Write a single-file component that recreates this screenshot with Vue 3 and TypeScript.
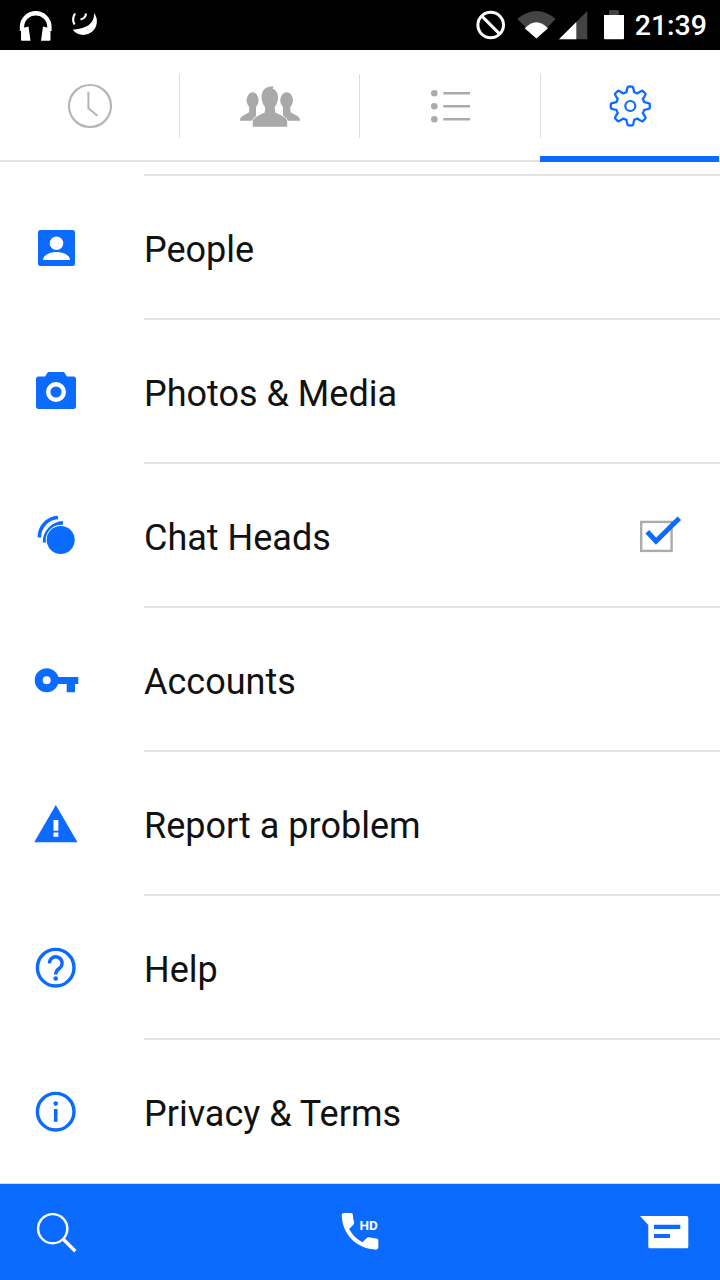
<script setup lang="ts">
const gearPath = (() => {
  const cx = 32.3, cy = 32, n = 8, pts: string[] = []
  for (let i = 0; i < 240; i++) {
    const t = (i / 240) * Math.PI * 2
    const c = Math.cos(n * t)
    const s = Math.max(-1, Math.min(1, c * 1.8))
    const r = 16.9 + 2.6 * s
    const x = cx + r * Math.sin(t)
    const y = cy - r * Math.cos(t)
    pts.push(`${x.toFixed(2)} ${y.toFixed(2)}`)
  }
  return 'M' + pts.join('L') + 'Z'
})()

const rows = [
  { key: 'people', label: 'People' },
  { key: 'camera', label: 'Photos & Media' },
  { key: 'chat', label: 'Chat Heads', check: true },
  { key: 'key', label: 'Accounts' },
  { key: 'warn', label: 'Report a problem' },
  { key: 'help', label: 'Help' },
  { key: 'info', label: 'Privacy & Terms' },
]
</script>

<template>
  <div class="page">
    <header class="status">
      <svg class="status-left" width="90" height="40" viewBox="0 0 90 40">
        <path d="M6 26V22a13.7 13.7 0 0 1 27.4 0v4" fill="none" stroke="#fff" stroke-width="4.4" />
        <path d="M5 23.5 12.5 21.5 14.5 35.8H6.5C5 35.8 5 35 5 33ZM34.5 23.5 27 21.5 25 35.8H33C34.5 35.8 34.5 35 34.5 33Z" fill="#fff" />
        <g transform="translate(52 4)">
          <path d="M26 4A13.5 13.5 0 0 1 4.7 20.7Q27 19 26 4Z" fill="#fff" />
          <path d="M7 4.5Q3.4 10.5 6.6 15.5M18 4.5Q17.5 9.5 12.5 10.5" fill="none" stroke="#fff" stroke-width="2.2" />
        </g>
      </svg>
      <div class="status-right">
        <svg width="156" height="50" viewBox="476 0 156 50">
          <circle cx="491.7" cy="25" r="12.8" fill="none" stroke="#fff" stroke-width="3" />
          <path d="M482.6 15.9 500.8 34.1" stroke="#fff" stroke-width="3" />
          <path d="M518.3 19Q537.5 3 556.7 19L537.4 38.5Z" fill="#444" />
          <path d="M525.7 28.3Q537.4 16 549 28.3L537.4 38.5Z" fill="#fff" />
          <path d="M560 39.3 588.3 11V39.3Z" fill="#444" />
          <path d="M560 39.3 577.3 22V39.3Z" fill="#fff" />
          <path d="M610 15V11.5C610 10.5 611 10 612 10H618C619 10 620 10.5 620 11.5V15Z" fill="#444" />
          <path d="M605 15H625V38C625 39 624.5 39.3 624 39.3H606C605.5 39.3 605 39 605 38Z" fill="#fff" />
        </svg>
        <span class="time">21:39</span>
      </div>
    </header>

    <nav class="tabs">
      <div class="tab sep">
        <svg width="64" height="64" viewBox="0 0 64 64">
          <circle cx="32" cy="32" r="21" fill="none" stroke="#b5b5b5" stroke-width="2.2" />
          <path d="M30.4 17.7V34.3L39.4 41.7" fill="none" stroke="#b5b5b5" stroke-width="2" />
        </svg>
      </div>
      <div class="tab sep">
        <svg width="64" height="64" viewBox="0 0 64 64">
          <g fill="#a9a9a9">
            <ellipse cx="14.6" cy="26.3" rx="6" ry="8" />
            <ellipse cx="48.6" cy="26.3" rx="6.4" ry="8" />
            <path d="M1.8 46.7C2 42 7 41 11 38.2L11.5 31H18V46.7Z" />
            <path d="M62.2 46.7C62 42 57 41 52.5 38.2L52 31H45V46.7Z" />
          </g>
          <g fill="#a9a9a9" stroke="#fff" stroke-width="1.6" paint-order="stroke">
            <path d="M14.8 52.7V47.5C15 43.5 21 41.5 26.8 38.6L27.5 30H36.5L37.2 38.6C43 41.5 49 43.5 49.2 47.5V52.7Z" />
            <path d="M23.6 23C23.6 16.5 27 12.4 35.5 12.2L34.6 14.4C38.4 16 40 19 40 23.5 40 30 36.5 35 31.8 35 27 35 23.6 29.5 23.6 23Z" />
          </g>
          <path d="M27.5 30H36.5L37.2 38.6 32 40 26.8 38.6Z" fill="#a9a9a9" />
        </svg>
      </div>
      <div class="tab">
        <svg width="64" height="64" viewBox="0 0 64 64">
          <g fill="#ababab">
            <circle cx="16.3" cy="19.3" r="3.3" />
            <circle cx="16.3" cy="32.3" r="3.3" />
            <circle cx="16.3" cy="45.3" r="3.3" />
          </g>
          <path d="M25.3 19.3H52M25.3 32.3H52M25.3 45.3H52" stroke="#ababab" stroke-width="2.6" />
        </svg>
      </div>
      <div class="tab active">
        <svg width="64" height="64" viewBox="0 0 64 64">
          <path :d="gearPath" fill="none" stroke="#0b6bff" stroke-width="2.3" stroke-linejoin="round" />
          <circle cx="32.3" cy="32" r="5" fill="none" stroke="#0b6bff" stroke-width="2.2" />
        </svg>
      </div>
    </nav>

    <main class="list">
      <div class="lead"></div>
      <div v-for="row in rows" :key="row.key" class="row">
        <span class="icon">
          <svg width="56" height="56" viewBox="0 0 56 56">
            <template v-if="row.key === 'people'">
              <rect x="10" y="10" width="37" height="36" rx="2.5" fill="#0b6bff" />
              <circle cx="28.5" cy="23.3" r="6.8" fill="#fff" />
              <path d="M15 40C15 35 22 32 28.5 32S42 35 42 40Z" fill="#fff" />
            </template>
            <template v-else-if="row.key === 'camera'">
              <path d="M10.5 12.5H17L20 8H36L39 12.5H45.5C47 12.5 48 13.5 48 15V42.5C48 44 47 45 45.5 45H10.5C9 45 8 44 8 42.5V15C8 13.5 9 12.5 10.5 12.5Z" fill="#0b6bff" />
              <circle cx="28" cy="28" r="7.8" fill="none" stroke="#fff" stroke-width="4.4" />
            </template>
            <template v-else-if="row.key === 'chat'">
              <path d="M11.4 29.5A19.5 19.5 0 0 1 30 9.5" fill="none" stroke="#0b6bff" stroke-width="3.6" />
              <path d="M16.5 34.5A19.5 19.5 0 0 1 35 14.8" fill="none" stroke="#0b6bff" stroke-width="3.6" />
              <circle cx="32.7" cy="32" r="14" fill="#0b6bff" stroke="#fff" stroke-width="2" paint-order="stroke" />
            </template>
            <template v-else-if="row.key === 'key'">
              <circle cx="18.7" cy="28.3" r="8" fill="none" stroke="#0b6bff" stroke-width="8" />
              <path d="M26 25H50.3V32H47V40.3H38.7V32H26Z" fill="#0b6bff" />
            </template>
            <template v-else-if="row.key === 'warn'">
              <path d="M27.8 9 49.5 46.3H6.2Z" fill="#0b6bff" />
              <path d="M25.5 24H30.3V34.7H25.5ZM25.5 36.4H30.3V40.8H25.5Z" fill="#fff" />
            </template>
            <template v-else-if="row.key === 'help'">
              <circle cx="27.7" cy="27.7" r="18.3" fill="none" stroke="#0b6bff" stroke-width="3.4" />
              <path d="M21.5 23.4A6.3 6.3 0 1 1 31.8 28C29 30 27.7 31 27.7 34.4" fill="none" stroke="#0b6bff" stroke-width="3.4" />
              <circle cx="27.7" cy="38.5" r="2.3" fill="#0b6bff" />
            </template>
            <template v-else>
              <circle cx="27.7" cy="27.7" r="18.3" fill="none" stroke="#0b6bff" stroke-width="3.4" />
              <circle cx="27.7" cy="19.5" r="2.3" fill="#0b6bff" />
              <path d="M27.7 25V37.8" stroke="#0b6bff" stroke-width="3.6" />
            </template>
          </svg>
        </span>
        <div class="label">
          <span class="label-text">{{ row.label }}</span>
          <svg v-if="row.check" class="check" width="56" height="56" viewBox="0 0 56 56">
            <rect x="9.2" y="13.9" width="30.4" height="29" fill="none" stroke="#ababab" stroke-width="2.4" />
            <path d="M15.3 23.7 24 33.2 47.3 10.3" fill="none" stroke="#0b6bff" stroke-width="5" />
          </svg>
        </div>
      </div>
    </main>

    <footer class="bottom">
      <span class="cell">
        <svg width="56" height="56" viewBox="0 0 56 56">
          <circle cx="24.7" cy="24.7" r="14.6" fill="none" stroke="#fff" stroke-width="2.4" />
          <path d="M35.3 35.3 47.3 47.3" stroke="#fff" stroke-width="3.4" />
        </svg>
      </span>
      <span class="cell">
        <svg width="56" height="56" viewBox="0 0 56 56">
          <path transform="translate(3.7 3) scale(2.03)" d="M6.62 10.79c1.44 2.83 3.76 5.14 6.59 6.59l2.2-2.2c.27-.27.67-.36 1.02-.24 1.12.37 2.33.57 3.57.57.55 0 1 .45 1 1V20c0 .55-.45 1-1 1-9.39 0-17-7.61-17-17 0-.55.45-1 1-1h3.5c.55 0 1 .45 1 1 0 1.25.2 2.45.57 3.57.11.35.03.74-.25 1.02l-2.2 2.2z" fill="#fff" />
          <text x="27.4" y="25.6" class="hd">HD</text>
        </svg>
      </span>
      <span class="cell">
        <svg width="56" height="56" viewBox="0 0 56 56">
          <path d="M4 12H50.5C51.7 12 52.3 12.7 52.3 14V42.5C52.3 43.7 51.7 44.3 50.5 44.3H14C12.8 44.3 12.3 43.7 12.3 42.5V21Z" fill="#fff" />
          <path d="M18 20.7H44.3V25H18ZM18 30H34V34H18Z" fill="#0b6bff" />
        </svg>
      </span>
    </footer>
  </div>
</template>

<style>
html, body { margin: 0; background: #fff; }
</style>

<style scoped>
.page {
  width: 720px;
  height: 1280px;
  display: flex;
  flex-direction: column;
  overflow: hidden;
  background: #fff;
  font-family: Roboto, sans-serif;
}
.status {
  height: 50px;
  flex: none;
  background: #000;
  display: flex;
  justify-content: space-between;
  align-items: center;
  padding: 0 13px 0 16px;
  box-sizing: border-box;
}
.status-left { display: block; }
.status-right { display: flex; align-items: center; }
.status-right svg { display: block; }
.time {
  color: #fff;
  font-size: 28.5px;
  font-weight: 500;
  margin-left: 4px;
}
.tabs {
  height: 112px;
  flex: none;
  display: grid;
  grid-template-columns: repeat(4, 180px);
  border-bottom: 2px solid #e4e4e4;
  box-sizing: border-box;
  position: relative;
}
.tab {
  display: flex;
  align-items: center;
  justify-content: center;
  position: relative;
  padding-top: 2px;
  box-sizing: border-box;
}
.tab svg { display: block; }
.tab.sep::after {
  content: "";
  position: absolute;
  right: 0;
  top: 24px;
  height: 64px;
  width: 1px;
  background: #dcdcdc;
}
.tab.active::before {
  content: "";
  position: absolute;
  left: 0;
  top: 24px;
  height: 64px;
  width: 1px;
  background: #dcdcdc;
}
.tab.active::after {
  content: "";
  position: absolute;
  left: 0;
  right: 1px;
  bottom: -2px;
  height: 6px;
  background: #0b6bff;
}
.list {
  flex: 1;
  min-height: 0;
  display: flex;
  flex-direction: column;
}
.lead {
  height: 12px;
  margin-left: 144px;
  border-bottom: 2px solid #e4e4e4;
  flex: none;
}
.row {
  height: 144px;
  flex: none;
  display: flex;
  align-items: stretch;
}
.icon {
  width: 144px;
  flex: none;
  display: flex;
  align-items: center;
  padding-left: 28px;
  box-sizing: border-box;
}
.icon svg { display: block; }
.label {
  flex: 1;
  display: flex;
  align-items: center;
  justify-content: space-between;
  padding-right: 32px;
  font-size: 36px;
  color: #111;
  border-bottom: 2px solid #e4e4e4;
  box-sizing: border-box;
}
.label-text { padding-top: 6px; }
.row:last-child .label { border-bottom: 2px solid transparent; }
.check { display: block; margin-top: 2px; }
.bottom {
  height: 97px;
  flex: none;
  background: #0b6bff;
  border-top: 1px solid #dcdcdc;
  box-sizing: border-box;
  display: flex;
  justify-content: space-between;
}
.cell {
  width: 112px;
  display: flex;
  align-items: center;
  justify-content: center;
}
.cell svg { display: block; }
.hd {
  font-family: Roboto, sans-serif;
  font-size: 13.5px;
  font-weight: 700;
  fill: #fff;
}
</style>
